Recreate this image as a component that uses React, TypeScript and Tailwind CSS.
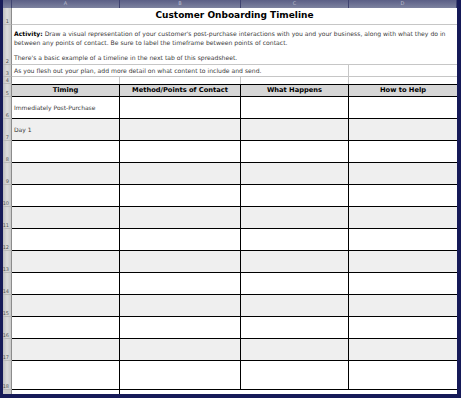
const font = { fontFamily: '"DejaVu Sans", Verdana, sans-serif' };

const cols = ["A", "B", "C", "D"];
const colW = ["w-[108px]", "w-[121px]", "w-[108px]", "w-[108px]"];

const dataRows = [
  "Immediately Post-Purchase",
  "Day 1",
  "",
  "",
  "",
  "",
  "",
  "",
  "",
  "",
  "",
  "",
  "",
];

function RowHead({ n, h }: { n: number | string; h: string }) {
  return (
    <div
      className={`${h} w-[9px] shrink-0 overflow-hidden border-b border-[#b9b9b9] border-r border-r-[#8c8c8c] bg-gradient-to-r from-[#bdbdbd] via-[#dcdcdc] to-[#c9c9c9] flex items-end justify-end`}
    >
      <span className="text-[5px] leading-[6px] text-[#555] pr-[2px] shrink-0">{n}</span>
    </div>
  );
}

export default function App() {
  return (
    <div
      className="w-[461px] h-[398px] bg-[#161a58] pl-[3px] pr-[4px] pb-[4px] overflow-hidden"
      style={font}
    >
      <div className="bg-white flex flex-col h-full">
        {/* column letters */}
        <div className="flex h-[8px] bg-gradient-to-b from-[#5b5f86] to-[#7d829f]">
          <div className="w-[9px] border-r border-[#3f4370]" />
          {cols.map((c, i) => (
            <div
              key={c}
              className={`${colW[i]} border-r border-[#3f4370] flex items-center justify-center text-[5px] text-[#b9bccd]`}
            >
              {c}
            </div>
          ))}
        </div>

        {/* title */}
        <div className="flex">
          <RowHead n={1} h="h-[17px]" />
          <div className="flex-1 h-[17px] border-b border-[#c6c6c6] flex items-center justify-center text-[9px] font-bold text-black">
            Customer Onboarding Timeline
          </div>
        </div>

        {/* activity */}
        <div className="flex">
          <RowHead n={2} h="h-[40px]" />
          <div className="flex-1 h-[40px] border-b border-[#c6c6c6] px-[2px] pt-[4px] text-[6.1px] leading-[9px] text-[#3a3a3a]">
            <p>
              <b className="text-black">Activity:</b> Draw a visual representation of
              your customer's post-purchase interactions with you and your business,
              along with what they do in between any points of contact. Be sure to
              label the timeframe between points of contact.
            </p>
            <p className="mt-[6px]">
              There's a basic example of a timeline in the next tab of this
              spreadsheet.
            </p>
          </div>
        </div>

        {/* flesh out */}
        <div className="flex">
          <RowHead n={3} h="h-[12px]" />
          <div className="w-[337px] h-[12px] border-b border-r border-[#c6c6c6] px-[2px] flex items-center text-[6.1px] text-[#3a3a3a]">
            As you flesh out your plan, add more detail on what content to include
            and send.
          </div>
          <div className="flex-1 h-[12px] border-b border-[#c6c6c6]" />
        </div>

        {/* empty row */}
        <div className="flex">
          <RowHead n={4} h="h-[7px]" />
          {cols.map((c, i) => (
            <div
              key={c}
              className={`${colW[i]} h-[7px] ${i < 3 ? "border-r" : ""} border-[#c6c6c6]`}
            />
          ))}
        </div>

        {/* header */}
        <div className="flex">
          <RowHead n={5} h="h-[13px]" />
          {["Timing", "Method/Points of Contact", "What Happens", "How to Help"].map(
            (t, i) => (
              <div
                key={t}
                className={`${colW[i]} h-[13px] bg-[#d6d6d6] border-t border-b border-black ${
                  i < 3 ? "border-r" : ""
                } flex items-center justify-center text-[6.7px] font-bold text-black`}
              >
                {t}
              </div>
            )
          )}
        </div>

        {/* data rows */}
        {dataRows.map((t, r) => {
          const h = r === dataRows.length - 1 ? "h-[29px]" : "h-[22px]";
          const bg = r % 2 === 0 ? "bg-white" : "bg-[#efefef]";
          return (
            <div key={r} className="flex">
              <RowHead n={r + 6} h={h} />
              {cols.map((c, i) => (
                <div
                  key={c}
                  className={`${colW[i]} ${h} ${bg} border-b border-black ${
                    i < 3 ? "border-r" : ""
                  } px-[2px] flex items-center text-[6px] text-[#3a3a3a]`}
                >
                  {i === 0 ? t : ""}
                </div>
              ))}
            </div>
          );
        })}

        {/* partial row */}
        <div className="flex flex-1">
          <div className="w-[9px] bg-[#c9c9c9] border-r border-[#8c8c8c]" />
          <div className="w-[108px] border-r border-black" />
          <div className="flex-1" />
        </div>
      </div>
    </div>
  );
}
